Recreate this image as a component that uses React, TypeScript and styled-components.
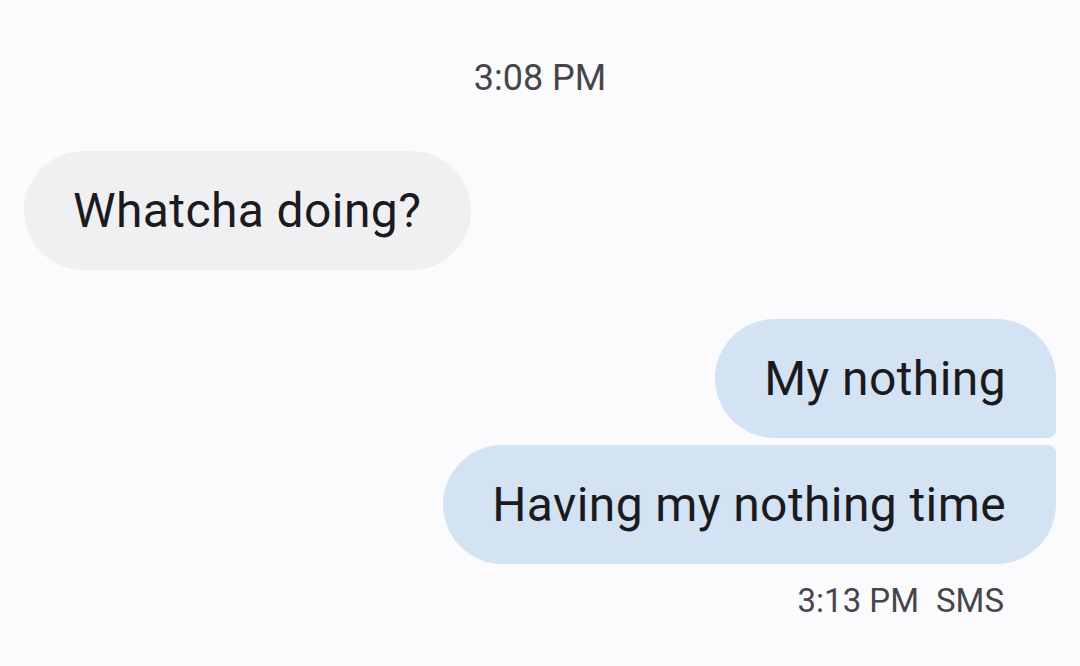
import React from 'react';
import styled, { createGlobalStyle } from 'styled-components';

const GlobalStyle = createGlobalStyle`
  html, body {
    margin: 0;
    padding: 0;
    background: #fbfbfe;
  }
`;

type Corner = 'first' | 'last' | 'single';

const outgoingRadius: Record<Corner, string> = {
  single: '60px',
  first: '60px 60px 8px 60px',
  last: '60px 8px 60px 60px',
};

export default function App() {
  return (
    <>
      <GlobalStyle />
      <Thread>
        <Stamp>3:08 PM</Stamp>
        <Incoming>Whatcha doing?</Incoming>
        <OutgoingGroup>
          <Outgoing $corner="first">My nothing</Outgoing>
          <Outgoing $corner="last">Having my nothing time</Outgoing>
        </OutgoingGroup>
        <Meta>
          <span>3:13 PM</span>
          <span>SMS</span>
        </Meta>
      </Thread>
    </>
  );
}

const Thread = styled.div`
  display: flex;
  flex-direction: column;
  height: 666px;
  box-sizing: border-box;
  padding: 57px 24px 0;
  font-family: Roboto, 'Liberation Sans', sans-serif;
  color: #1b1b1f;
`;

const Stamp = styled.div`
  text-align: center;
  font-size: 36px;
  line-height: 42px;
  color: #46464a;
`;

const Bubble = styled.div`
  display: flex;
  align-items: center;
  height: 119px;
  box-sizing: border-box;
  padding: 0 50px 0 49px;
  font-size: 48px;
  letter-spacing: 0.4px;
  white-space: nowrap;
`;

const Incoming = styled(Bubble)`
  align-self: flex-start;
  margin-top: 52px;
  background: #f0f0f2;
  border-radius: 60px;
`;

const OutgoingGroup = styled.div`
  display: flex;
  flex-direction: column;
  align-items: flex-end;
  gap: 7px;
  margin-top: 49px;
`;

const Outgoing = styled(Bubble)<{ $corner: Corner }>`
  background: #d3e3f3;
  border-radius: ${(p) => outgoingRadius[p.$corner]};
`;

const Meta = styled.div`
  display: flex;
  justify-content: flex-end;
  gap: 17px;
  margin-top: 16px;
  padding-right: 52px;
  font-size: 33px;
  line-height: 42px;
  color: #46464a;
`;
